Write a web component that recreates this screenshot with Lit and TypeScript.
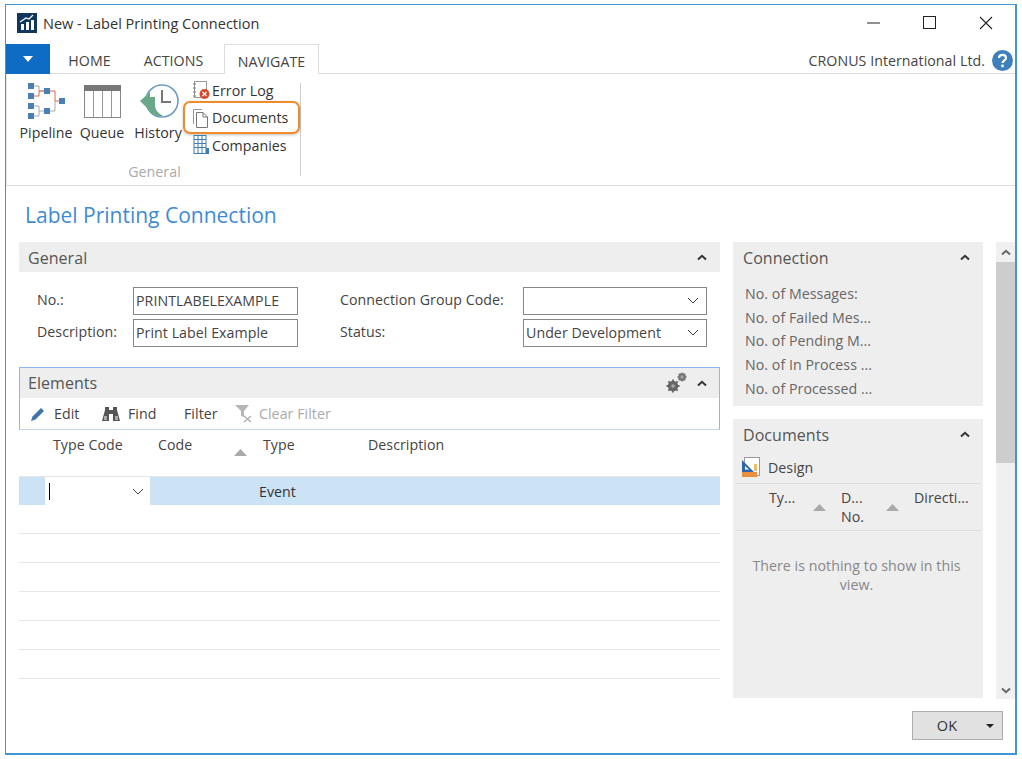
import { LitElement, html, css, svg } from 'lit';
import { customElement } from 'lit/decorators.js';

const chevUp = html`<svg class="chev" width="10" height="7" viewBox="0 0 10 7"><path d="M1 5.5 L5 1.8 L9 5.5" fill="none" stroke="#333" stroke-width="2"/></svg>`;
const sortUp = html`<svg class="sort" width="13" height="7" viewBox="0 0 13 7"><path d="M0 7 L6.5 0 L13 7Z" fill="#aaa"/></svg>`;

const pipelineIcon = html`<svg width="42" height="38" viewBox="0 0 42 38">
  <path d="M9 4H14V9H22M9 24H14V29H22M9 34H14V29M25 29H30V19" fill="none" stroke="#aaa" stroke-width="1"/>
  <path d="M9 14H14V9H22M25 9H30V19H37" fill="none" stroke="#d9694e" stroke-width="1"/>
  ${[[6, 4], [6, 14], [6, 24], [6, 34], [22, 9], [22, 29], [37, 19]].map(
    ([x, y]) => svg`<rect x=${x - 3} y=${y - 3} width="6" height="6" fill="#4a7fb5"/>`
  )}
</svg>`;

const queueIcon = html`<svg width="37" height="33" viewBox="0 0 37 33">
  <rect x="0.5" y="0.5" width="36" height="32" fill="#fff" stroke="#888"/>
  <rect x="0" y="0" width="37" height="6" fill="#777"/>
  <path d="M9.5 6V33M18.5 6V33M27.5 6V33" stroke="#999" fill="none"/>
</svg>`;

const historyIcon = html`<svg width="44" height="38" viewBox="0 0 44 38">
  <circle cx="26" cy="19" r="16" fill="#fff" stroke="#6d9bc8" stroke-width="1.6"/>
  <path d="M26 8V20H35" fill="none" stroke="#777" stroke-width="2"/>
  <path d="M4 19 L14 10 V15 H19 V23 C19 28 22 31 27 34 C20 35 14 32 12 27 Z" fill="#6aa889"/>
</svg>`;

const errorIcon = html`<svg width="20" height="20" viewBox="0 0 20 20">
  <rect x="3.5" y="1.5" width="12" height="16" fill="#fff" stroke="#999"/>
  <path d="M2 4H5M2 8H5M2 12H5M2 16H5" stroke="#777"/>
  <circle cx="13.5" cy="14" r="5" fill="#d9482b"/>
  <path d="M11.5 12L15.5 16M15.5 12L11.5 16" stroke="#fff" stroke-width="1.2"/>
</svg>`;

const docIcon = html`<svg width="20" height="20" viewBox="0 0 20 20">
  <path d="M2.5 16V1.5H11" fill="none" stroke="#999"/>
  <path d="M5.5 19.5V4.5H12L16.5 9V19.5Z M12 4.5V9H16.5" fill="#fff" stroke="#777"/>
</svg>`;

const companyIcon = html`<svg width="20" height="20" viewBox="0 0 20 20">
  <rect x="3" y="0.5" width="12" height="18" fill="#fff" stroke="#3f7cb5"/>
  <path d="M3 4.5H15M3 8.5H15M3 12.5H15M7 0.5V18M11 0.5V18" stroke="#3f7cb5"/>
  <rect x="15" y="13" width="3" height="6" fill="#3f7cb5"/>
</svg>`;

const logoIcon = html`<svg width="20" height="20" viewBox="0 0 20 20">
  <rect width="20" height="20" fill="#10385f"/>
  <path d="M4 17V11H7V17ZM9 17V9H12V17ZM14 17V7H17V17Z" fill="#fff"/>
  <path d="M3 9L9 5L12 6L16 2" fill="none" stroke="#fff" stroke-width="1.2"/>
</svg>`;

const helpIcon = html`<svg width="21" height="21" viewBox="0 0 21 21">
  <circle cx="10.5" cy="10.5" r="10.5" fill="#3f7fbc"/>
  <path d="M7 8C7 3.8 14 3.8 14 8C14 10.5 10.5 10.3 10.5 13" fill="none" stroke="#fff" stroke-width="2.2"/>
  <rect x="9.3" y="14.6" width="2.4" height="2.6" fill="#fff"/>
</svg>`;

const editIcon = html`<svg width="16" height="16" viewBox="0 0 16 16">
  <path d="M1 15L2.5 10.5L11 2L14 5L5.5 13.5Z" fill="#3f74ad"/>
</svg>`;

const findIcon = html`<svg width="20" height="16" viewBox="0 0 20 16">
  <path d="M4 1H8V4H12V1H16V4L19 15H12V8H8V15H1L4 4Z" fill="#555"/>
  <rect x="3" y="10" width="3" height="4" fill="#aaa"/>
  <rect x="14" y="10" width="3" height="4" fill="#aaa"/>
</svg>`;

const clearFilterIcon = html`<svg width="20" height="20" viewBox="0 0 20 20">
  <path d="M1 1H15L10 7V13L7 12V7Z" fill="#b5b5b5"/>
  <path d="M10 12L17 18M17 12L10 18" stroke="#aaa" stroke-width="1.2"/>
</svg>`;

const gearsIcon = html`<svg width="22" height="22" viewBox="0 0 22 22">
  <circle cx="7" cy="14" r="4" fill="#999" stroke="#666" stroke-width="2.4"/>
  <path d="M7 7.5V20.5M0.5 14H13.5M2.4 9.4L11.6 18.6M11.6 9.4L2.4 18.6" stroke="#666" stroke-width="1.8"/>
  <circle cx="7" cy="14" r="1.8" fill="#aaa"/>
  <circle cx="16" cy="5" r="3" fill="#999" stroke="#777" stroke-width="1.8"/>
  <path d="M16 0.5V9.5M11.5 5H20.5M12.8 1.8L19.2 8.2M19.2 1.8L12.8 8.2" stroke="#777" stroke-width="1.3"/>
  <circle cx="16" cy="5" r="1.4" fill="#aaa"/>
</svg>`;

const designIcon = html`<svg width="20" height="22" viewBox="0 0 20 22">
  <rect x="3.5" y="0.5" width="15" height="18" fill="#fff" stroke="#999"/>
  <path d="M1 3V15H13Z" fill="#2f68a8"/>
  <path d="M4 9V12.5H8Z" fill="#fff"/>
  <rect x="13" y="7" width="3" height="7" fill="#eebb66"/>
  <rect x="1" y="15" width="15" height="5" fill="#e8903c"/>
</svg>`;

const pickDown = html`<svg width="12" height="7" viewBox="0 0 12 7"><path d="M1 1 L6 6 L11 1" fill="none" stroke="#444" stroke-width="1"/></svg>`;

@customElement('app-root')
export class AppRoot extends LitElement {
  static styles = css`
    :host {
      display: block;
      width: 1022px;
      height: 759px;
      box-sizing: border-box;
      padding: 4px 5px 4px 5px;
      background: #fff;
      font-family: 'Open Sans', 'Noto Sans', sans-serif;
      font-size: 14.2px;
      color: #444;
      letter-spacing: 0.05px;
    }
    .window {
      height: 100%;
      box-sizing: border-box;
      border: 1px solid #3f96d6;
      border-right-width: 2px;
      border-bottom-width: 2px;
      display: flex;
      flex-direction: column;
      overflow: hidden;
    }
    .titlebar {
      height: 39px;
      flex: none;
      display: flex;
      align-items: center;
      padding: 0 0 3px 11px;
      box-sizing: border-box;
      gap: 6px;
      color: #333;
      font-size: 14.5px;
      letter-spacing: 0;
    }
    .winbtns {
      margin-left: auto;
      display: flex;
      align-items: center;
      gap: 43px;
      padding-right: 22px;
      padding-bottom: 1px;
    }
    .tabs {
      height: 29px;
      flex: none;
      display: flex;
      align-items: stretch;
      border-bottom: 1px solid #ddd;
      box-sizing: content-box;
    }
    .file {
      width: 44px;
      background: #0f6cc4;
      display: flex;
      align-items: center;
      justify-content: center;
      margin-bottom: -1px;
    }
    .tab {
      display: flex;
      align-items: center;
      justify-content: center;
      color: #444;
      padding-top: 3px;
      box-sizing: border-box;
    }
    .tab.home { width: 79px; }
    .tab.actions { width: 89px; }
    .tab.nav {
      width: 95px;
      border: 1px solid #ddd;
      border-bottom: none;
      background: #fff;
      margin-bottom: -1px;
      margin-left: 6px;
    }
    .company {
      margin-left: auto;
      display: flex;
      align-items: center;
      gap: 7px;
      padding-right: 2px;
      padding-top: 3px;
    }
    .ribbon {
      height: 111px;
      flex: none;
      border-bottom: 1px solid #ddd;
      border-left: 1px solid #e6e6e6;
      display: flex;
      box-sizing: content-box;
    }
    .group {
      width: 294px;
      height: 93px;
      margin-top: 9px;
      border-right: 1px solid #ccc;
      box-sizing: border-box;
      display: flex;
      flex-direction: column;
    }
    .group-main {
      display: flex;
      height: 78px;
      flex: none;
      padding-left: 11px;
    }
    .big {
      display: flex;
      flex-direction: column;
      align-items: center;
      width: 56px;
      height: 62px;
      color: #333;
    }
    .big .ic {
      height: 36px;
      display: flex;
      align-items: center;
      justify-content: center;
    }
    .big span { line-height: 16px; margin-top: 6px; }
    .small-list {
      display: flex;
      flex-direction: column;
      margin-top: -6.5px;
      margin-left: -3px;
    }
    .small {
      display: flex;
      align-items: center;
      height: 27.5px;
      flex: none;
      gap: 1px;
      padding-left: 8px;
      box-sizing: border-box;
      width: 117px;
      color: #333;
    }
    .small.hl {
      border: 2px solid #ed8b2d;
      border-radius: 7px;
      height: 33px;
      margin: -3px 0 -2.5px;
      padding-left: 6px;
      box-shadow: 0 1px 3px rgba(0, 0, 0, 0.25);
    }
    .group-label {
      text-align: center;
      color: #aaa;
      line-height: 16px;
      margin-top: 3px;
      padding-left: 2px;
    }
    .page {
      flex: 1;
      min-height: 0;
      display: flex;
      flex-direction: column;
      padding: 0 2px 0 13px;
    }
    .pagetitle {
      height: 56px;
      flex: none;
      display: flex;
      align-items: center;
      padding: 2px 0 0 6px;
      box-sizing: border-box;
      color: #3f8bd3;
      font-size: 21px;
      font-weight: 400;
      letter-spacing: 0;
    }
    .cols {
      flex: 1;
      min-height: 0;
      display: flex;
    }
    .left {
      width: 701px;
      flex: none;
    }
    .right {
      width: 250px;
      flex: none;
      margin-left: 13px;
      display: flex;
      flex-direction: column;
      gap: 13px;
    }
    .head {
      height: 30px;
      display: flex;
      align-items: center;
      justify-content: space-between;
      background: #eeeeee;
      padding: 1px 13px 0 9px;
      box-sizing: border-box;
      font-size: 16px;
      color: #555;
    }
    .head .tools { display: flex; align-items: center; gap: 9px; }
    .general-grid {
      display: grid;
      grid-template-columns: 96px 165px 225px 184px;
      grid-auto-rows: 28px;
      row-gap: 4px;
      padding: 15px 0 0 18px;
      height: 80px;
      box-sizing: content-box;
      align-items: center;
    }
    .general-grid label { color: #444; white-space: nowrap; padding-bottom: 3px; }
    .general-grid label.second { padding-left: 42px; }
    .input {
      height: 28px;
      box-sizing: border-box;
      border: 1px solid #888;
      display: flex;
      align-items: center;
      padding: 0 2px 2px;
      color: #444;
      justify-content: space-between;
      white-space: nowrap;
    }
    .input svg { margin-right: 5px; }
    .elements {
      height: 63px;
      border: 1px solid #8ab6f5;
      border-bottom-color: #c5d3e6;
      box-sizing: border-box;
    }
    .elements .head { height: 30px; margin: 0; padding: 0 12px 0 8px; }
    .toolbar {
      display: flex;
      align-items: center;
      height: 31px;
      padding-left: 10px;
      color: #444;
    }
    .tool { display: flex; align-items: center; gap: 7px; flex: none; }
    .tool.t-edit { width: 71px; gap: 8px; }
    .tool.t-find { width: 83px; }
    .tool.t-filter { width: 50px; }
    .tool.dis { color: #aaa; gap: 5px; }
    .thead {
      height: 46px;
      display: flex;
      padding-top: 6px;
      box-sizing: border-box;
      color: #444;
      line-height: 18px;
    }
    .c1 { width: 34px; flex: none; }
    .c2 { width: 105px; flex: none; }
    .c4 { width: 105px; flex: none; }
    .sortcell {
      width: 105px;
      flex: none;
      display: flex;
      justify-content: space-between;
      padding-right: 16px;
      box-sizing: border-box;
    }
    .sortcell svg { margin-top: 13px; }
    .row {
      height: 29px;
      box-sizing: border-box;
      border-bottom: 1px solid #e8e8e8;
    }
    .row.sel {
      background: #cce3f6;
      border-bottom: none;
      height: 29px;
      border-top: 1px solid #e6e6e6;
      display: flex;
      align-items: stretch;
      color: #333;
    }
    .row.sel .edit {
      width: 105px;
      margin-left: 26px;
      background: #fff;
      display: flex;
      align-items: center;
      justify-content: space-between;
      padding: 0 6px 0 4px;
      box-sizing: border-box;
    }
    .caret { width: 1px; height: 17px; background: #000; }
    .row.sel .ev { margin-left: 109px; display: flex; align-items: center; }
    .panel { background: #eeeeee; }
    .panel.conn { height: 164px; flex: none; }
    .panel.docs { flex: none; height: 279px; display: flex; flex-direction: column; }
    .panel .head { padding: 0 13px 0 10px; height: 31px; }
    .conn-list {
      padding: 9px 0 0 12px;
      display: flex;
      flex-direction: column;
      color: #666;
    }
    .conn-list div { height: 23.7px; line-height: 23.7px; white-space: nowrap; }
    .design {
      display: flex;
      align-items: center;
      gap: 7px;
      height: 33px;
      padding: 2px 0 0 8px;
      box-sizing: border-box;
      color: #444;
    }
    .dhead {
      margin: 0 2px 0 3px;
      border-top: 1px solid #ddd;
      border-bottom: 1px solid #ddd;
      height: 48px;
      flex: none;
      display: flex;
      box-sizing: border-box;
      padding-top: 5px;
      line-height: 18.5px;
      color: #444;
      white-space: nowrap;
    }
    .dhead .a { margin-left: 33px; width: 44px; flex: none; }
    .dhead .b { margin-left: 15px; width: 45px; flex: none; }
    .dhead .d { margin-left: 15px; }
    .dhead svg { margin-top: 15px; flex: none; }
    .empty {
      text-align: center;
      color: #888;
      padding: 25px 19px 0 16px;
      line-height: 19px;
    }
    .scroll {
      width: 19px;
      margin-left: 13px;
      height: 457px;
      flex: none;
      background: #f0f0f0;
      display: flex;
      flex-direction: column;
      align-items: center;
      position: relative;
    }
    .scroll .thumb {
      width: 19px;
      height: 201px;
      margin-top: 20px;
      background: #cdcdcd;
    }
    .scroll .down { margin-top: auto; margin-bottom: 5px; }
    .scroll .up { position: absolute; top: 7px; }
    .footer {
      height: 56px;
      flex: none;
      display: flex;
      justify-content: flex-end;
      align-items: flex-start;
      padding: 14px 12px 0 0;
      box-sizing: border-box;
    }
    .ok {
      width: 91px;
      height: 29px;
      box-sizing: border-box;
      background: #e1e1e1;
      border: 1px solid #adadad;
      display: flex;
      align-items: center;
      color: #333;
      font-size: 14.5px;
    }
    .ok span { width: 68px; text-align: center; }
    .ok svg { margin-left: 5px; }
  `;

  render() {
    return html`<div class="window">
      <div class="titlebar">
        ${logoIcon}<span>New - Label Printing Connection</span>
        <div class="winbtns">
          <svg width="13" height="13" viewBox="0 0 13 13"><path d="M0 7H13" stroke="#222" stroke-width="1"/></svg>
          <svg width="13" height="13" viewBox="0 0 13 13"><rect x="0.5" y="0.5" width="12" height="12" fill="none" stroke="#222" stroke-width="1"/></svg>
          <svg width="14" height="14" viewBox="0 0 14 14"><path d="M1 1L13 13M13 1L1 13" stroke="#222" stroke-width="1.1"/></svg>
        </div>
      </div>
      <div class="tabs">
        <div class="file"><svg width="10" height="6" viewBox="0 0 10 6"><path d="M0 0H10L5 6Z" fill="#fff"/></svg></div>
        <div class="tab home">HOME</div>
        <div class="tab actions">ACTIONS</div>
        <div class="tab nav">NAVIGATE</div>
        <div class="company"><span>CRONUS International Ltd.</span>${helpIcon}</div>
      </div>
      <div class="ribbon">
        <div class="group">
          <div class="group-main">
            <div class="big"><div class="ic">${pipelineIcon}</div><span>Pipeline</span></div>
            <div class="big"><div class="ic">${queueIcon}</div><span>Queue</span></div>
            <div class="big"><div class="ic">${historyIcon}</div><span>History</span></div>
            <div class="small-list">
              <div class="small">${errorIcon}<span>Error Log</span></div>
              <div class="small hl">${docIcon}<span>Documents</span></div>
              <div class="small">${companyIcon}<span>Companies</span></div>
            </div>
          </div>
          <div class="group-label">General</div>
        </div>
      </div>
      <div class="page">
        <div class="pagetitle">Label Printing Connection</div>
        <div class="cols">
          <div class="left">
            <div class="head"><span>General</span>${chevUp}</div>
            <div class="general-grid">
              <label>No.:</label>
              <div class="input">PRINTLABELEXAMPLE</div>
              <label class="second">Connection Group Code:</label>
              <div class="input"><span></span>${pickDown}</div>
              <label>Description:</label>
              <div class="input">Print Label Example</div>
              <label class="second">Status:</label>
              <div class="input"><span>Under Development</span>${pickDown}</div>
            </div>
            <div class="elements">
              <div class="head"><span>Elements</span><div class="tools">${gearsIcon}${chevUp}</div></div>
              <div class="toolbar">
                <div class="tool t-edit">${editIcon}<span>Edit</span></div>
                <div class="tool t-find">${findIcon}<span>Find</span></div>
                <div class="tool t-filter"><span>Filter</span></div>
                <div class="tool dis">${clearFilterIcon}<span>Clear Filter</span></div>
              </div>
            </div>
            <div class="thead">
              <div class="c1"></div>
              <div class="c2">Type Code</div>
              <div class="sortcell"><span>Code</span>${sortUp}</div>
              <div class="c4">Type</div>
              <div>Description</div>
            </div>
            <div class="row sel">
              <div class="edit"><div class="caret"></div>${pickDown}</div>
              <div class="ev">Event</div>
            </div>
            <div class="row"></div>
            <div class="row"></div>
            <div class="row"></div>
            <div class="row"></div>
            <div class="row"></div>
            <div class="row"></div>
          </div>
          <div class="right">
            <div class="panel conn">
              <div class="head"><span>Connection</span>${chevUp}</div>
              <div class="conn-list">
                <div>No. of Messages:</div>
                <div>No. of Failed Mes...</div>
                <div>No. of Pending M...</div>
                <div>No. of In Process ...</div>
                <div>No. of Processed ...</div>
              </div>
            </div>
            <div class="panel docs">
              <div class="head"><span>Documents</span>${chevUp}</div>
              <div class="design">${designIcon}<span>Design</span></div>
              <div class="dhead">
                <div class="a">Ty...</div>
                ${sortUp}
                <div class="b">D...<br />No.</div>
                ${sortUp}
                <div class="d">Directi...</div>
              </div>
              <div class="empty">There is nothing to show in this view.</div>
            </div>
          </div>
          <div class="scroll">
            <svg class="up" width="10" height="7" viewBox="0 0 10 7"><path d="M1 5.5 L5 1.8 L9 5.5" fill="none" stroke="#666" stroke-width="2"/></svg>
            <div class="thumb"></div>
            <svg class="down" width="10" height="7" viewBox="0 0 10 7"><path d="M1 1.5 L5 5.2 L9 1.5" fill="none" stroke="#666" stroke-width="2"/></svg>
          </div>
        </div>
      </div>
      <div class="footer">
        <div class="ok"><span>OK</span><svg width="8" height="4" viewBox="0 0 8 4"><path d="M0 0H8L4 4Z" fill="#222"/></svg></div>
      </div>
    </div>`;
  }
}
